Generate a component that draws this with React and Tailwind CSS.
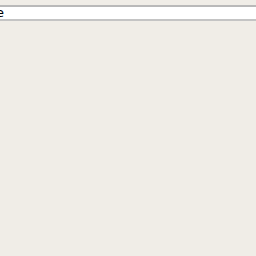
export default function App() {
  return (
    <div className="min-h-[256px] w-[256px] overflow-hidden bg-[#f0ede7] pt-[5px]">
      <div className="h-[16px] w-[256px] border-t-2 border-b-2 border-t-[#b9b9b9] border-b-[#c4c4c4] bg-white">
        <div className="ml-[-4px] text-[13px] leading-[12px] text-black" style={{ fontFamily: '"DejaVu Sans", sans-serif' }}>
          e
        </div>
      </div>
    </div>
  );
}
